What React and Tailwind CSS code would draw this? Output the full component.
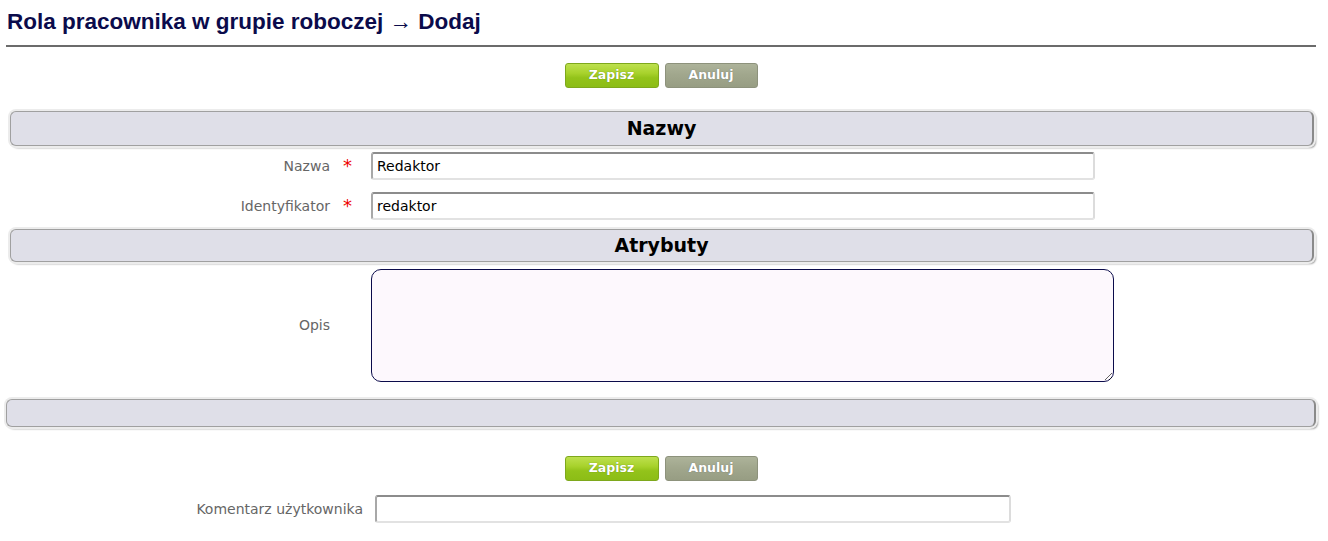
import React from "react";

const dv = { fontFamily: '"DejaVu Sans", Verdana, sans-serif' };

function Buttons() {
  return (
    <div className="flex justify-center gap-[6px]">
      <button
        style={dv}
        className="w-[94px] h-[25px] rounded-[3px] border border-[#7ea81c] bg-[linear-gradient(#bde04e_0%,#a8d22c_40%,#93c31a_60%,#8cbd16_100%)] text-white font-bold text-[12.5px] [text-shadow:0_0_1px_#5a7a10]"
      >
        Zapisz
      </button>
      <button
        style={dv}
        className="w-[93px] h-[25px] rounded-[3px] border border-[#8d927c] bg-[linear-gradient(#adb39a_0%,#a1a78d_45%,#979d83_100%)] text-white font-bold text-[12.5px] [text-shadow:0_0_1px_#666]"
      >
        Anuluj
      </button>
    </div>
  );
}

function Bar({ title, className = "" }) {
  return (
    <div
      className={
        "rounded-[6px] border border-[#a0a0a0] border-r-2 border-r-[#8a8a8a] bg-[#dfdfe8] shadow-[0_0_0_2px_#ececec,2px_2px_2px_#8a8a8a] flex items-center justify-center " +
        className
      }
    >
      {title && (
        <span style={dv} className="font-bold text-[19px] text-black">
          {title}
        </span>
      )}
    </div>
  );
}

function Field({ label, value, req }) {
  return (
    <div className="flex items-center h-[28px]">
      <div style={dv} className="w-[324px] text-right text-[14px] text-[#666]">
        {label}
      </div>
      <div className="w-[41px] pl-[13px] text-[#e00] text-[18px] leading-none" style={dv}>
        {req ? "*" : ""}
      </div>
      <div
        style={dv}
        className="w-[724px] h-[28px] rounded-[3px] border-2 border-t-[#8c8c8c] border-l-[#a8a8a8] border-r-[#dcdcdc] border-b-[#e2e2e2] bg-white flex items-center px-[4px] text-[14px] text-black"
      >
        {value}
      </div>
    </div>
  );
}

export default function App() {
  return (
    <div className="bg-white w-[1328px] h-[541px] overflow-hidden px-[6px]">
      <h1
        style={{ fontFamily: '"Liberation Sans", Arial, sans-serif' }}
        className="pt-[8px] pl-[1px] text-[22.5px] leading-[27px] font-bold text-[#0b0b4b]"
      >
        Rola pracownika w grupie roboczej → Dodaj
      </h1>
      <div className="mt-[10px] w-[1310px] h-[2px] bg-[#6b6b6b]" />
      <div className="mt-[16px] w-[1310px]">
        <Buttons />
      </div>
      <div className="w-[1310px] mt-[23px] pl-[4px] pr-[2px]">
        <Bar title="Nazwy" className="h-[35px]" />
      </div>
      <div className="mt-[6px]">
        <Field label="Nazwa" value="Redaktor" req />
      </div>
      <div className="mt-[12px]">
        <Field label="Identyfikator" value="redaktor" req />
      </div>
      <div className="w-[1310px] mt-[9px] pl-[4px] pr-[2px]">
        <Bar title="Atrybuty" className="h-[33px]" />
      </div>
      <div className="flex items-center mt-[7px]">
        <div style={dv} className="w-[324px] text-right text-[14px] text-[#666]">
          Opis
        </div>
        <textarea className="ml-[41px] w-[743px] h-[113px] rounded-[10px] border border-[#0b0b4b] bg-[#fdf8fd] outline-none" />
      </div>
      <div className="w-[1310px] mt-[17px]">
        <Bar className="h-[28px]" />
      </div>
      <div className="mt-[29px] w-[1310px]">
        <Buttons />
      </div>
      <div className="flex items-center mt-[14px]">
        <div style={dv} className="w-[357px] text-right text-[14px] text-[#666]">
          Komentarz użytkownika
        </div>
        <div className="ml-[12px] w-[636px] h-[28px] rounded-[3px] border-2 border-t-[#8c8c8c] border-l-[#a8a8a8] border-r-[#dcdcdc] border-b-[#e2e2e2] bg-white" />
      </div>
    </div>
  );
}
